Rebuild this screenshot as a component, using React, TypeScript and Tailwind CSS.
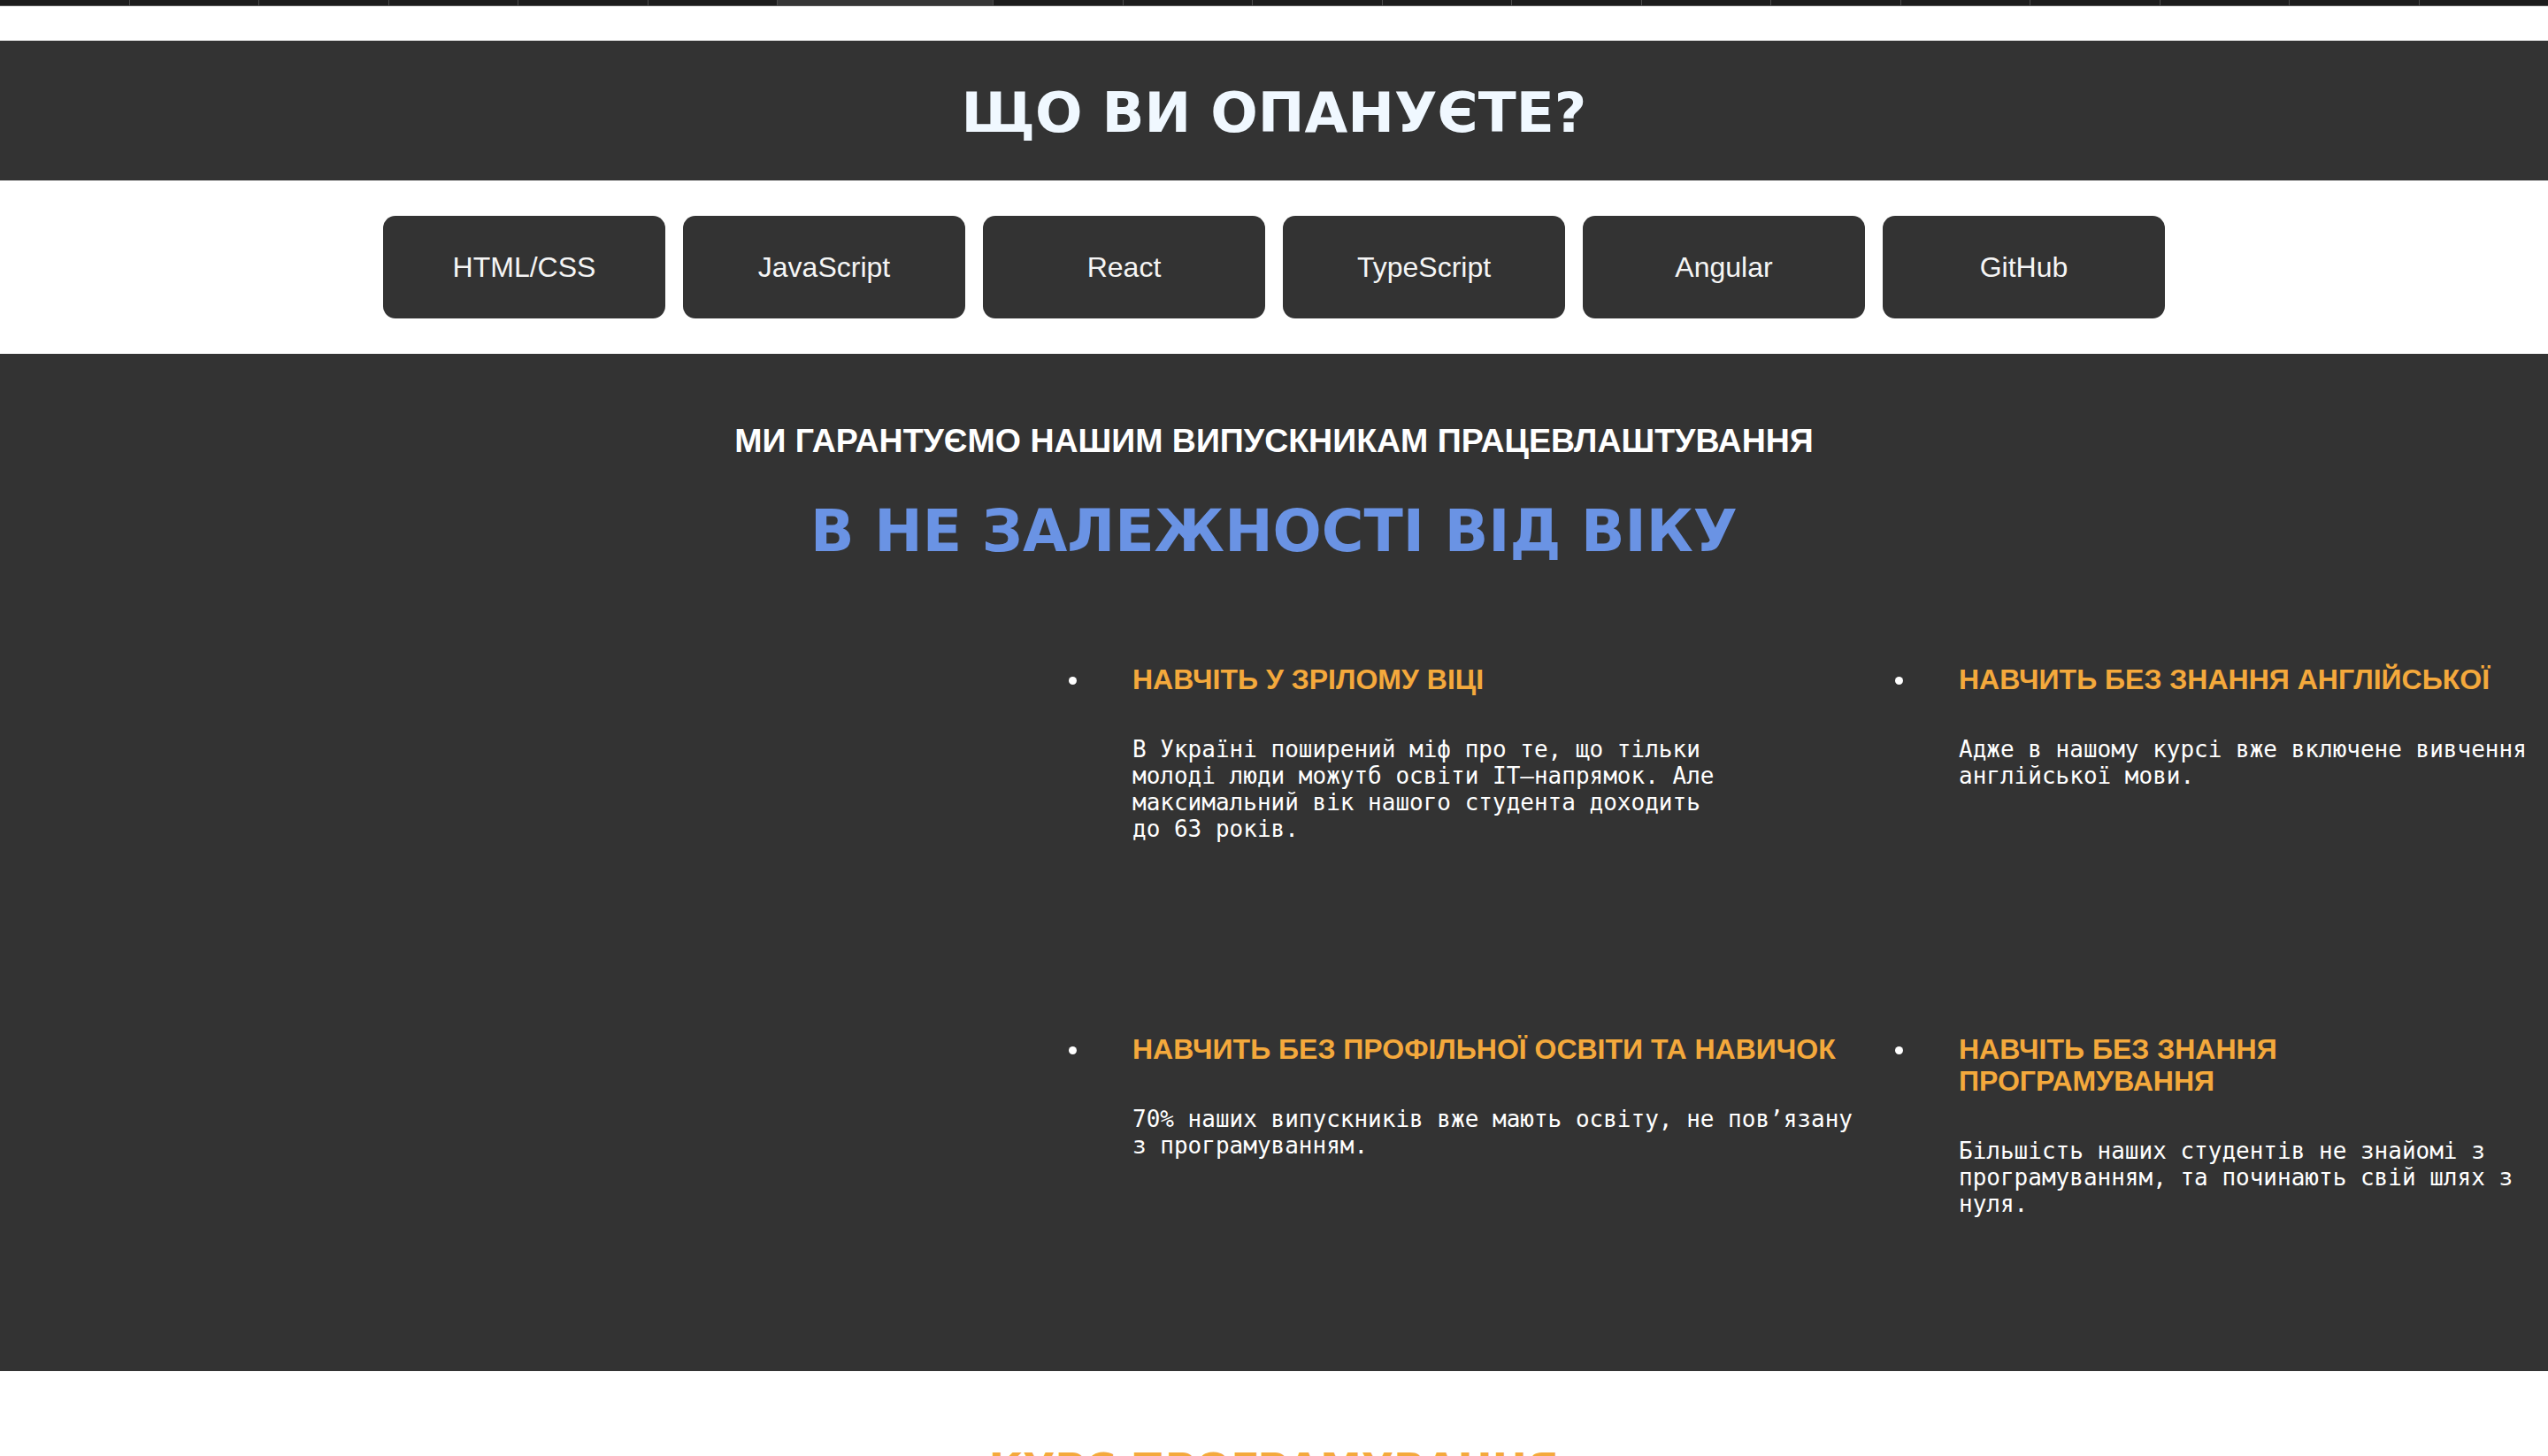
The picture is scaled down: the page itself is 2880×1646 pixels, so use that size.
const skills = ["HTML/CSS", "JavaScript", "React", "TypeScript", "Angular", "GitHub"];

const features = [
    {
        title: "НАВЧІТЬ У ЗРІЛОМУ ВІЦІ",
        text: "В Україні поширений міф про те, що тільки молоді люди можутб освіти IT—напрямок. Але максимальний вік нашого студента доходить до 63 років.",
        titleWidth: "max-w-[830px]",
        textWidth: "max-w-[672px]",
    },
    {
        title: "НАВЧИТЬ БЕЗ ЗНАННЯ АНГЛІЙСЬКОЇ",
        text: "Адже в нашому курсі вже включене вивчення англійської мови.",
        titleWidth: "max-w-[660px]",
        textWidth: "max-w-[648px]",
    },
    {
        title: "НАВЧИТЬ БЕЗ ПРОФІЛЬНОЇ ОСВІТИ ТА НАВИЧОК",
        text: "70% наших випускників вже мають освіту, не пов’язану з програмуванням.",
        titleWidth: "max-w-[840px]",
        textWidth: "max-w-[830px]",
    },
    {
        title: "НАВЧІТЬ БЕЗ ЗНАННЯ ПРОГРАМУВАННЯ",
        text: "Більшість наших студентів не знайомі з програмуванням, та починають свій шлях з нуля.",
        titleWidth: "max-w-[640px]",
        textWidth: "max-w-[648px]",
    },
];

export default function App() {
    return (
        <div className="w-full min-h-[1646px] bg-white overflow-hidden">
            {/* Tab strip left over from the previous section */}
            <div className="flex h-[7px] bg-[#1c1c1c] border-b border-[#555]">
                {Array.from({ length: 6 }).map((_, i) => (
                    <div key={"a" + i} className="flex-1 border-r border-[#4a4a4a]" />
                ))}
                <div className="w-[244px] bg-[#363636] border-r border-[#4a4a4a]" />
                {Array.from({ length: 12 }).map((_, i) => (
                    <div key={"b" + i} className="flex-1 border-r border-[#4a4a4a] last:border-r-0" />
                ))}
            </div>

            {/* Header */}
            <div className="mt-[39px] h-[158px] bg-[#333333] flex items-center justify-center">
                <h1 className="pt-[6px] font-['DejaVu_Sans',sans-serif] font-bold text-[63px] leading-[74px] text-[#f0f8ff]">
                    ЩО ВИ ОПАНУЄТЕ?
                </h1>
            </div>

            {/* Skills */}
            <div className="py-[40px] flex justify-center gap-[20px]">
                {skills.map((s) => (
                    <button
                        key={s}
                        className="w-[319px] h-[116px] rounded-[14px] bg-[#333333] text-[#f5f5f5] font-['Liberation_Sans',Arial,sans-serif] text-[32px]"
                    >
                        {s}
                    </button>
                ))}
            </div>

            {/* Guarantee section */}
            <section className="bg-[#333333] pt-[77px] pb-[174px]">
                <h2 className="text-center text-white font-['Liberation_Sans',Arial,sans-serif] font-bold text-[37.5px] leading-[42px]">
                    МИ ГАРАНТУЄМО НАШИМ ВИПУСКНИКАМ ПРАЦЕВЛАШТУВАННЯ
                </h2>
                <h3 className="mt-[45px] text-center text-[#6a93e4] font-['DejaVu_Sans',sans-serif] font-bold text-[65px] leading-[74px]">
                    В НЕ ЗАЛЕЖНОСТІ ВІД ВІКУ
                </h3>

                <ul className="mt-[112px] ml-[1208px] grid grid-cols-[934px_1fr] gap-y-[216px]">
                    {features.map((f) => (
                        <li key={f.title} className="flex">
                            <span className="mt-[15px] w-[9px] h-[9px] rounded-full bg-white shrink-0" />
                            <div className="ml-[63px] min-w-0">
                                <h4 className={`${f.titleWidth} font-['Liberation_Sans',Arial,sans-serif] font-bold text-[32px] leading-[36px] text-[#f4a93c]`}>
                                    {f.title}
                                </h4>
                                <p className={`mt-[46px] ${f.textWidth} font-['DejaVu_Sans_Mono',monospace] text-[26px] leading-[30px] text-white`}>
                                    {f.text}
                                </p>
                            </div>
                        </li>
                    ))}
                </ul>
            </section>

            {/* Next section */}
            <section className="pt-[82px] text-center">
                <h2 className="font-['DejaVu_Sans',sans-serif] font-bold text-[47px] leading-[56px] text-[#f4a93c]">
                    КУРС ПРОГРАМУВАННЯ
                </h2>
            </section>
        </div>
    );
}
